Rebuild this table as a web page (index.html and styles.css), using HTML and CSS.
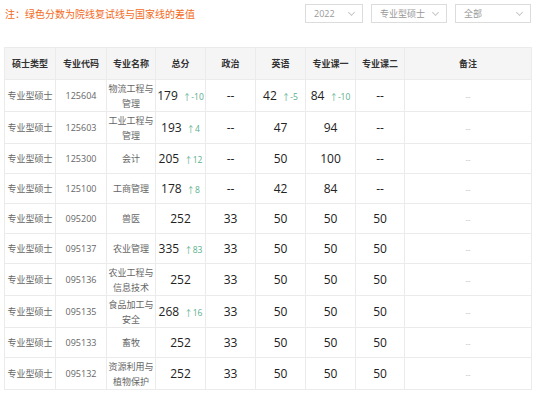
FILE: index.html
```html
<!DOCTYPE html>
<html lang="zh">
<head>
<meta charset="utf-8">
<link rel="stylesheet" href="styles.css">
</head>
<body>
<div class="page">
  <div class="topbar">
    <div class="note">注：绿色分数为院线复试线与国家线的差值</div>
    <div class="filters">
      <div class="sel sel-year"><span>2022</span><i class="chev"></i></div>
      <div class="sel"><span>专业型硕士</span><i class="chev"></i></div>
      <div class="sel"><span>全部</span><i class="chev"></i></div>
    </div>
  </div>
  <table class="tbl">
    <colgroup>
      <col class="c1"><col class="c2"><col class="c3"><col class="c4"><col class="c5"><col class="c6"><col class="c7"><col class="c8"><col class="c9">
    </colgroup>
    <thead>
      <tr><th>硕士类型</th><th>专业代码</th><th>专业名称</th><th>总分</th><th>政治</th><th>英语</th><th>专业课一</th><th>专业课二</th><th>备注</th></tr>
    </thead>
    <tbody>
      <tr class="r2"><td class="t">专业型硕士</td><td class="t">125604</td><td class="t name">物流工程与<br>管理</td><td class="s">179<em>↑-10</em></td><td class="s">--</td><td class="s">42<em>↑-5</em></td><td class="s">84<em>↑-10</em></td><td class="s">--</td><td class="rm">--</td></tr>
      <tr class="r2"><td class="t">专业型硕士</td><td class="t">125603</td><td class="t name">工业工程与<br>管理</td><td class="s">193<em>↑4</em></td><td class="s">--</td><td class="s">47</td><td class="s">94</td><td class="s">--</td><td class="rm">--</td></tr>
      <tr><td class="t">专业型硕士</td><td class="t">125300</td><td class="t name">会计</td><td class="s">205<em>↑12</em></td><td class="s">--</td><td class="s">50</td><td class="s">100</td><td class="s">--</td><td class="rm">--</td></tr>
      <tr><td class="t">专业型硕士</td><td class="t">125100</td><td class="t name">工商管理</td><td class="s">178<em>↑8</em></td><td class="s">--</td><td class="s">42</td><td class="s">84</td><td class="s">--</td><td class="rm">--</td></tr>
      <tr><td class="t">专业型硕士</td><td class="t">095200</td><td class="t name">兽医</td><td class="s">252</td><td class="s">33</td><td class="s">50</td><td class="s">50</td><td class="s">50</td><td class="rm">--</td></tr>
      <tr><td class="t">专业型硕士</td><td class="t">095137</td><td class="t name">农业管理</td><td class="s">335<em>↑83</em></td><td class="s">33</td><td class="s">50</td><td class="s">50</td><td class="s">50</td><td class="rm">--</td></tr>
      <tr class="r2"><td class="t">专业型硕士</td><td class="t">095136</td><td class="t name">农业工程与<br>信息技术</td><td class="s">252</td><td class="s">33</td><td class="s">50</td><td class="s">50</td><td class="s">50</td><td class="rm">--</td></tr>
      <tr class="r2"><td class="t">专业型硕士</td><td class="t">095135</td><td class="t name">食品加工与<br>安全</td><td class="s">268<em>↑16</em></td><td class="s">33</td><td class="s">50</td><td class="s">50</td><td class="s">50</td><td class="rm">--</td></tr>
      <tr><td class="t">专业型硕士</td><td class="t">095133</td><td class="t name">畜牧</td><td class="s">252</td><td class="s">33</td><td class="s">50</td><td class="s">50</td><td class="s">50</td><td class="rm">--</td></tr>
      <tr class="r2"><td class="t">专业型硕士</td><td class="t">095132</td><td class="t name">资源利用与<br>植物保护</td><td class="s">252</td><td class="s">33</td><td class="s">50</td><td class="s">50</td><td class="s">50</td><td class="rm">--</td></tr>
    </tbody>
  </table>
</div>
</body>
</html>
```
FILE: styles.css
```css
html, body {
  margin: 0;
  padding: 0;
  background: #fff;
}
body {
  font-family: "Open Sans", "Noto Sans CJK SC", sans-serif;
  color: #333;
}
.page {
  padding: 4px 5px 0 4px;
}
.topbar {
  display: flex;
  justify-content: space-between;
  align-items: center;
  height: 19px;
  margin-bottom: 24px;
}
.note {
  font-family: "Noto Sans CJK SC", sans-serif;
  font-size: 10px;
  color: #f26a1b;
  padding-left: 1px;
}
.filters {
  display: flex;
  gap: 8px;
}
.sel {
  box-sizing: border-box;
  width: 76px;
  height: 19px;
  border: 1px solid #dcdcdc;
  display: flex;
  align-items: center;
  justify-content: space-between;
  padding: 0 8px 0 8px;
  font-size: 9px;
  color: #999;
  background: #fff;
}
.sel-year {
  width: 58px;
}
.chev {
  width: 4px;
  height: 4px;
  border-right: 1px solid #c8c8c8;
  border-bottom: 1px solid #c8c8c8;
  transform: rotate(45deg);
  margin-top: -3px;
}
.tbl {
  width: 527px;
  border-collapse: collapse;
  table-layout: fixed;
}
.c1, .c2 { width: 51px; }
.c3 { width: 49px; }
.c4, .c5, .c6, .c7 { width: 50px; }
.c8 { width: 49px; }
.c9 { width: 127px; }
.tbl th, .tbl td {
  border: 1px solid #ebebeb;
  text-align: center;
  padding: 0;
}
.tbl th {
  background: #f5f5f5;
  height: 31px;
  font-size: 9px;
  font-weight: bold;
  color: #333;
}
.tbl td {
  height: 29px;
}
.tbl tr.r2 td {
  height: 31px;
}
.t {
  font-size: 9px;
  color: #666;
}
.name {
  line-height: 15px;
}
.s {
  font-size: 12px;
  color: #222;
  white-space: nowrap;
}
.s em {
  font-style: normal;
  font-size: 8.5px;
  color: #5aae8c;
  margin-left: 5px;
}
.rm {
  font-size: 8px;
  color: #bbb;
}
```
